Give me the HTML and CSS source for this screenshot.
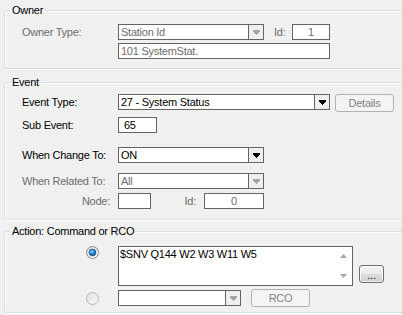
FILE: index.html
```html
<!DOCTYPE html>
<html lang="en">
<head>
  <meta charset="UTF-8">
  <title>Event Action</title>
  <link rel="stylesheet" href="styles.css">
</head>
<body>
  <fieldset class="group">
    <legend>Owner</legend>
    <div class="group-body owner">
      <div class="row">
        <span class="lbl off">Owner Type:</span>
        <div class="combo off w146">
          <span class="val">Station Id</span>
          <span class="drop"><svg width="7" height="5" viewBox="0 0 7 5" shape-rendering="crispEdges"><path d="M0 0h7v2h-1v1h-1v1h-1v1h-1v-1h-1v-1h-1v-1h-1z" fill="#a3a3a3"/></svg></span>
        </div>
        <span class="id-lbl off">Id:</span>
        <div class="box off num w38">1</div>
      </div>
      <div class="row second">
        <span class="lbl"></span>
        <div class="box off w212">101 SystemStat.</div>
      </div>
    </div>
  </fieldset>

  <fieldset class="group event-group">
    <legend>Event</legend>
    <div class="group-body event">
      <div class="row r-type">
        <span class="lbl">Event Type:</span>
        <div class="combo w212">
          <span class="val">27 - System Status</span>
          <span class="drop"><svg width="7" height="5" viewBox="0 0 7 5" shape-rendering="crispEdges"><path d="M0 0h7v2h-1v1h-1v1h-1v1h-1v-1h-1v-1h-1v-1h-1z" fill="#000"/></svg></span>
        </div>
        <button class="btn disabled details" disabled>Details</button>
      </div>
      <div class="row r-sub">
        <span class="lbl">Sub Event:</span>
        <div class="box w39 pad5">65</div>
      </div>
      <div class="row r-change">
        <span class="lbl">When Change To:</span>
        <div class="combo w146">
          <span class="val">ON</span>
          <span class="drop"><svg width="7" height="5" viewBox="0 0 7 5" shape-rendering="crispEdges"><path d="M0 0h7v2h-1v1h-1v1h-1v1h-1v-1h-1v-1h-1v-1h-1z" fill="#000"/></svg></span>
        </div>
      </div>
      <div class="row r-related">
        <span class="lbl off">When Related To:</span>
        <div class="combo off w146">
          <span class="val">All</span>
          <span class="drop"><svg width="7" height="5" viewBox="0 0 7 5" shape-rendering="crispEdges"><path d="M0 0h7v2h-1v1h-1v1h-1v1h-1v-1h-1v-1h-1v-1h-1z" fill="#a3a3a3"/></svg></span>
        </div>
      </div>
      <div class="row r-node">
        <span class="lbl off right">Node:</span>
        <div class="box w33"></div>
        <span class="node-id off">Id:</span>
        <div class="box off num w60">0</div>
      </div>
    </div>
  </fieldset>

  <fieldset class="group action-group">
    <legend>Action: Command or RCO</legend>
    <div class="group-body action">
      <div class="row r-cmd">
        <span class="radio-col">
          <svg width="13" height="13" viewBox="0 0 13 13">
            <defs>
              <linearGradient id="rbOn" x1="0" y1="0" x2="1" y2="1">
                <stop offset="0" stop-color="#d2d2d2"/>
                <stop offset="1" stop-color="#fdfdfd"/>
              </linearGradient>
              <radialGradient id="dot" cx="0.42" cy="0.38" r="0.65">
                <stop offset="0" stop-color="#9ce0ff"/>
                <stop offset="0.45" stop-color="#1f8fdc"/>
                <stop offset="1" stop-color="#0c4a86"/>
              </radialGradient>
            </defs>
            <circle cx="6.5" cy="6.5" r="6" fill="url(#rbOn)" stroke="#8e8f8f"/>
            <circle cx="6.5" cy="6.5" r="3.4" fill="url(#dot)" stroke="#27598c" stroke-width="0.6"/>
          </svg>
        </span>
        <div class="cmd">
          <span class="cmd-text">$SNV Q144 W2 W3 W11 W5</span>
          <span class="scroll">
            <svg width="7" height="4" viewBox="0 0 7 4"><path d="M0 4L3.5 0L7 4z" fill="#a8a8a8"/></svg>
            <svg width="7" height="4" viewBox="0 0 7 4"><path d="M0 0L3.5 4L7 0z" fill="#a8a8a8"/></svg>
          </span>
        </div>
        <button class="btn more">...</button>
      </div>
      <div class="row r-rco">
        <span class="radio-col">
          <svg width="13" height="13" viewBox="0 0 13 13">
            <defs>
              <linearGradient id="rbOff" x1="0" y1="0" x2="1" y2="1">
                <stop offset="0" stop-color="#dedede"/>
                <stop offset="1" stop-color="#fbfbfb"/>
              </linearGradient>
            </defs>
            <circle cx="6.5" cy="6.5" r="6" fill="url(#rbOff)" stroke="#b4b4b4"/>
          </svg>
        </span>
        <div class="combo w123">
          <span class="val"></span>
          <span class="drop"><svg width="7" height="5" viewBox="0 0 7 5" shape-rendering="crispEdges"><path d="M0 0h7v2h-1v1h-1v1h-1v1h-1v-1h-1v-1h-1v-1h-1z" fill="#a3a3a3"/></svg></span>
        </div>
        <button class="btn disabled rco" disabled>RCO</button>
      </div>
    </div>
  </fieldset>
</body>
</html>
```

FILE: styles.css
```css
html, body {
  margin: 0;
  overflow: hidden;
}
body {
  width: 402px;
  height: 315px;
  box-sizing: border-box;
  padding: 4px 0 0 4px;
  background: #f0f0f0;
  font-family: "Liberation Sans", Arial, sans-serif;
  font-size: 11px;
  letter-spacing: -0.25px;
  color: #000;
}
.group {
  margin: 0 -12px 0 0;
  padding: 0;
  min-width: 0;
  border: 1px solid #d5dfe5;
  border-radius: 3px;
  box-shadow: inset 1px 1px 0 #fff, 1px 1px 0 #fff;
}
.group legend {
  margin-left: 5px;
  padding: 0 2px;
  line-height: 13px;
  background: #f0f0f0;
}
.event-group {
  margin-top: 7px;
}
.action-group {
  margin-top: 5px;
}
.group-body {
  padding-left: 17px;
}
.owner {
  padding-top: 7px;
  padding-bottom: 9px;
}
.event {
  padding-top: 5px;
  padding-bottom: 10px;
}
.action {
  padding-top: 8px;
  padding-bottom: 5px;
}
.row {
  display: flex;
  align-items: flex-start;
}
.second {
  margin-top: 3px;
}
.r-sub {
  margin-top: 5px;
}
.r-change {
  margin-top: 14px;
}
.r-related {
  margin-top: 10px;
}
.r-node {
  margin-top: 4px;
}
.r-rco {
  margin-top: 3px;
  align-items: center;
}
.lbl {
  flex: none;
  width: 96px;
  height: 16px;
  line-height: 16px;
  white-space: nowrap;
}
.lbl.right {
  box-sizing: border-box;
  padding-right: 8px;
  text-align: right;
}
.off {
  color: #6d6d6d;
}
.combo, .box {
  flex: none;
  box-sizing: border-box;
  height: 16px;
  border: 1px solid #646464;
  background: #fff;
  line-height: 14px;
  white-space: nowrap;
  overflow: hidden;
}
.combo {
  display: flex;
}
.combo .val {
  flex: 1;
  padding-left: 2px;
  overflow: hidden;
}
.combo .drop {
  flex: none;
  width: 15px;
  box-sizing: border-box;
  border-left: 1px solid #646464;
  background: #efefef;
  display: flex;
  align-items: center;
  justify-content: center;
}
.box {
  padding-left: 2px;
}
.box.num {
  padding-left: 0;
  text-align: center;
}
.box.pad5 {
  padding-left: 5px;
}
.w33 { width: 33px; }
.w38 { width: 38px; }
.w39 { width: 39px; }
.w60 { width: 60px; }
.w123 { width: 123px; }
.w146 { width: 146px; }
.w212 { width: 212px; }
.id-lbl {
  width: 18px;
  margin-left: 10px;
  line-height: 16px;
}
.node-id {
  width: 53px;
  box-sizing: border-box;
  padding-right: 8px;
  text-align: right;
  line-height: 16px;
}
.btn {
  flex: none;
  box-sizing: border-box;
  height: 18px;
  padding: 0;
  border: 1px solid #707070;
  border-radius: 3px;
  background: linear-gradient(#f2f2f2 0%, #ebebeb 50%, #dddddd 51%, #cfcfcf 100%);
  box-shadow: inset 0 0 0 1px rgba(255,255,255,0.7);
  font-family: inherit;
  font-size: 11px;
  letter-spacing: -0.25px;
  color: #000;
  line-height: 16px;
}
.btn.disabled {
  border-color: #adb2b5;
  background: #f4f4f4;
  box-shadow: none;
  color: #838383;
}
.details {
  width: 59px;
  margin-left: 5px;
}
.rco {
  width: 59px;
  margin-left: 10px;
}
.more {
  width: 25px;
  margin-left: 6px;
  margin-bottom: 3px;
  align-self: flex-end;
  line-height: 18px;
}
.radio-col {
  flex: none;
  width: 96px;
  box-sizing: border-box;
  padding-right: 19px;
  display: flex;
  justify-content: flex-end;
}
.radio-col svg {
  display: block;
}
.cmd {
  flex: none;
  display: flex;
  box-sizing: border-box;
  width: 235px;
  height: 40px;
  border: 1px solid #646464;
  background: #fff;
}
.cmd-text {
  flex: 1;
  padding: 1px 0 0 1px;
  line-height: 13px;
  white-space: nowrap;
  overflow: hidden;
}
.scroll {
  flex: none;
  width: 17px;
  box-sizing: border-box;
  padding: 7px 0 7px;
  display: flex;
  flex-direction: column;
  justify-content: space-between;
  align-items: center;
}
.scroll svg {
  display: block;
}
```
